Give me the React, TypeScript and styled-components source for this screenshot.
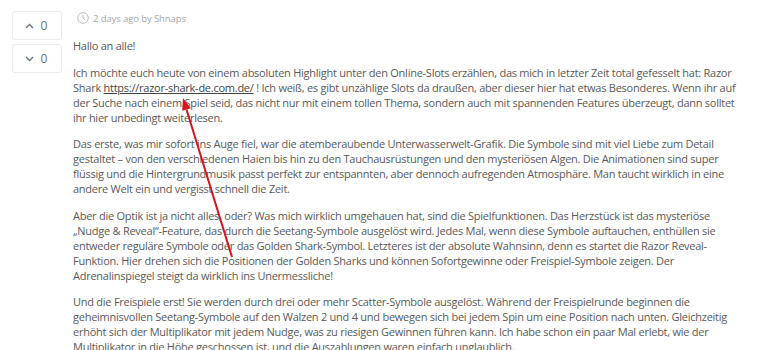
import styled, { createGlobalStyle } from "styled-components";

const GlobalStyle = createGlobalStyle`
    html, body {
        margin: 0;
        padding: 0;
        background: #ffffff;
    }
    body {
        font-family: "Open Sans", "Noto Sans", sans-serif;
    }
`;

const paragraphs = [
    "Das erste, was mir sofort ins Auge fiel, war die atemberaubende Unterwasserwelt-Grafik. Die Symbole sind mit viel Liebe zum Detail gestaltet – von den verschiedenen Haien bis hin zu den Tauchausrüstungen und den mysteriösen Algen. Die Animationen sind super flüssig und die Hintergrundmusik passt perfekt zur entspannten, aber dennoch aufregenden Atmosphäre. Man taucht wirklich in eine andere Welt ein und vergisst schnell die Zeit.",
    "Aber die Optik ist ja nicht alles, oder? Was mich wirklich umgehauen hat, sind die Spielfunktionen. Das Herzstück ist das mysteriöse „Nudge & Reveal“-Feature, das durch die Seetang-Symbole ausgelöst wird. Jedes Mal, wenn diese Symbole auftauchen, enthüllen sie entweder reguläre Symbole oder das Golden Shark-Symbol. Letzteres ist der absolute Wahnsinn, denn es startet die Razor Reveal-Funktion. Hier drehen sich die Positionen der Golden Sharks und können Sofortgewinne oder Freispiel-Symbole zeigen. Der Adrenalinspiegel steigt da wirklich ins Unermessliche!",
    "Und die Freispiele erst! Sie werden durch drei oder mehr Scatter-Symbole ausgelöst. Während der Freispielrunde beginnen die geheimnisvollen Seetang-Symbole auf den Walzen 2 und 4 und bewegen sich bei jedem Spin um eine Position nach unten. Gleichzeitig erhöht sich der Multiplikator mit jedem Nudge, was zu riesigen Gewinnen führen kann. Ich habe schon ein paar Mal erlebt, wie der Multiplikator in die Höhe geschossen ist, und die Auszahlungen waren einfach unglaublich.",
];

const ChevronUp = () => (
    <svg width="9" height="6" viewBox="0 0 9 6" fill="none">
        <path d="M1 5L4.5 1.5L8 5" stroke="currentColor" strokeWidth="1.3" />
    </svg>
);

const ChevronDown = () => (
    <svg width="9" height="6" viewBox="0 0 9 6" fill="none">
        <path d="M1 1L4.5 4.5L8 1" stroke="currentColor" strokeWidth="1.3" />
    </svg>
);

const ClockIcon = () => (
    <svg width="12" height="12" viewBox="0 0 12 12" fill="none">
        <circle cx="6" cy="6" r="5.3" stroke="#b5b9bf" strokeWidth="1" />
        <path d="M6 2.8V6.2L8.2 7.6" stroke="#b5b9bf" strokeWidth="1" />
    </svg>
);

const App = () => {
    return (
        <Page>
            <GlobalStyle />
            <VoteColumn>
                <VoteButton>
                    <ChevronUp />
                    <VoteCount>0</VoteCount>
                </VoteButton>
                <VoteButton>
                    <ChevronDown />
                    <VoteCount>0</VoteCount>
                </VoteButton>
            </VoteColumn>
            <PostBody>
                <Meta>
                    <ClockIcon />
                    <span>2 days ago by Shnaps</span>
                </Meta>
                <Paragraph>Hallo an alle!</Paragraph>
                <Paragraph>
                    Ich möchte euch heute von einem absoluten Highlight unter den Online-Slots
                    erzählen, das mich in letzter Zeit total gefesselt hat: Razor Shark{" "}
                    <Link href="#">https://razor-shark-de.com.de/</Link> ! Ich weiß, es gibt
                    unzählige Slots da draußen, aber dieser hier hat etwas Besonderes. Wenn ihr
                    auf der Suche nach einem Spiel seid, das nicht nur mit einem tollen Thema,
                    sondern auch mit spannenden Features überzeugt, dann solltet ihr hier
                    unbedingt weiterlesen.
                </Paragraph>
                {paragraphs.map((text, i) => (
                    <Paragraph key={i}>{text}</Paragraph>
                ))}
            </PostBody>
            <Annotation width="768" height="350" viewBox="0 0 768 350">
                <line x1="232" y1="257" x2="186.5" y2="109.5" stroke="#d4161f" strokeWidth="2" />
                <polygon points="183,98 190.8,108.2 182.2,110.8" fill="#d4161f" />
            </Annotation>
        </Page>
    );
};

export default App;

const Page = styled.div`
    position: relative;
    width: 768px;
    height: 350px;
    overflow: hidden;
    display: flex;
    align-items: flex-start;
    gap: 11px;
    padding: 11px 0 0 12px;
    box-sizing: border-box;
`;

const VoteColumn = styled.div`
    display: flex;
    flex-direction: column;
    gap: 4px;
    flex: 0 0 50px;
`;

const VoteButton = styled.div`
    height: 29px;
    box-sizing: border-box;
    border: 1px solid #ebebeb;
    border-radius: 3px;
    display: flex;
    align-items: center;
    justify-content: center;
    gap: 7px;
    color: #66717e;
    padding-right: 2px;
`;

const VoteCount = styled.span`
    font-size: 12px;
    line-height: 1;
`;

const PostBody = styled.div`
    flex: 0 0 664px;
`;

const Meta = styled.div`
    display: flex;
    align-items: center;
    gap: 4px;
    height: 14px;
    padding-left: 4px;
    margin-bottom: 13px;
    font-size: 9.5px;
    letter-spacing: -0.1px;
    color: #a3a7ad;
`;

const Paragraph = styled.p`
    margin: 0 0 11.5px;
    font-size: 11px;
    letter-spacing: -0.25px;
    line-height: 15px;
    color: #595959;
`;

const Link = styled.a`
    color: #444444;
    text-decoration: underline;
`;

const Annotation = styled.svg`
    position: absolute;
    left: 0;
    top: 0;
    pointer-events: none;
`;
